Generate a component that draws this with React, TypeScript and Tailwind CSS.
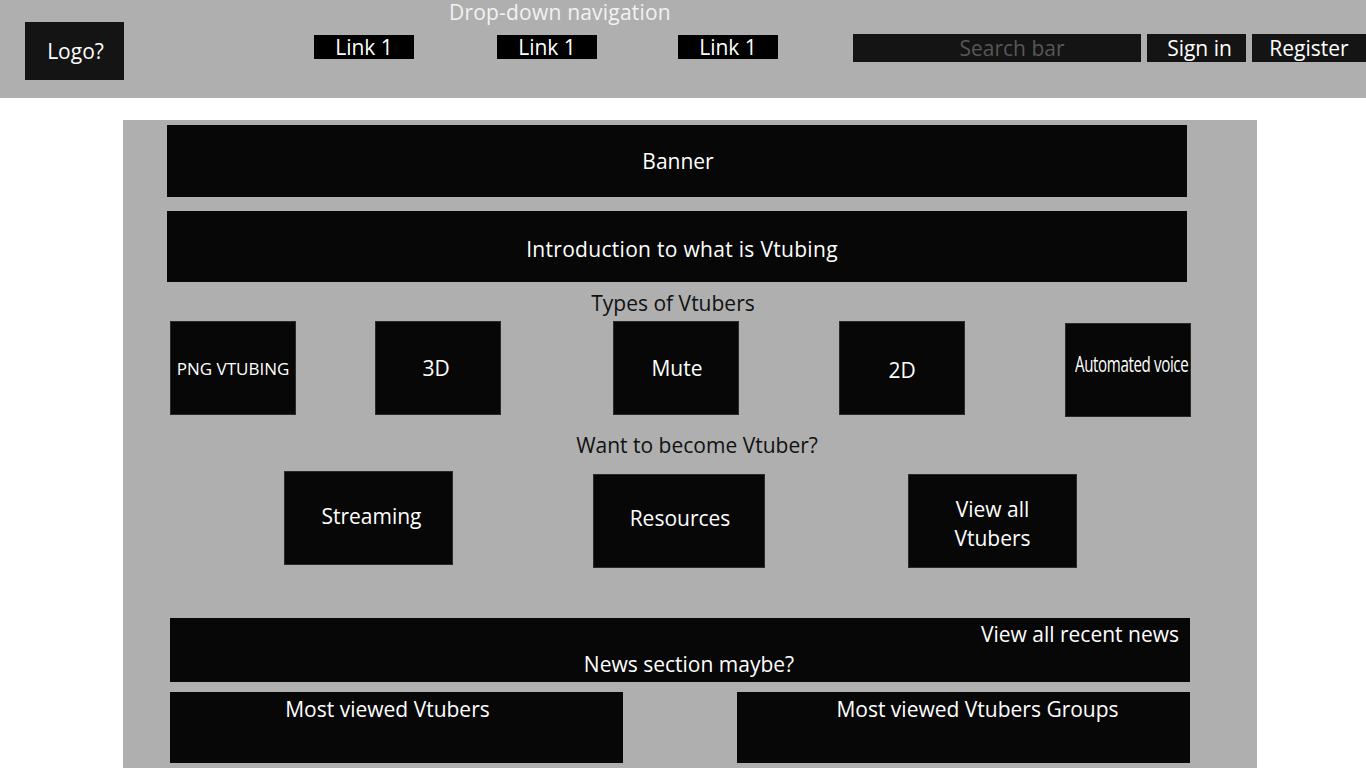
import React from 'react';

const font = { fontFamily: '"Open Sans", "Noto Sans", sans-serif' };

function TypeBox({ label, className }: { label: string; className: string }) {
  return (
    <div
      className={`flex h-[94px] w-[126px] items-center justify-center border border-[#2a2a2a] bg-[#070707] text-white ${className}`}
    >
      {label}
    </div>
  );
}

export default function App() {
  return (
    <div className="min-h-[768px] bg-white text-[21px] leading-none" style={font}>
      {/* top bar */}
      <header className="flex h-[98px] bg-[#afafaf]">
        <div className="ml-[25px] mt-[22px] flex h-[58px] w-[100px] items-center justify-center bg-[#141414] pl-[2px] text-white">
          Logo?
        </div>
        <div className="ml-[190px] flex flex-col">
          <div className="ml-[135px] h-[35px] text-[#f2f2f2] leading-[24px] tracking-[0.2px]">Drop-down navigation</div>
          <div className="flex gap-[81px]">
            <div className="flex h-[24px] w-[100px] items-center justify-center bg-black text-white">Link 1</div>
            <div className="ml-[2px] flex h-[24px] w-[100px] items-center justify-center bg-black text-white">Link 1</div>
            <div className="flex h-[24px] w-[100px] items-center justify-center bg-black text-white">Link 1</div>
          </div>
        </div>
        <div className="ml-[75px] mt-[34px] flex h-[28px] gap-[6px]">
          <div className="flex w-[288px] items-center justify-center pl-[30px] bg-[#141414] text-[#575757]">Search bar</div>
          <div className="flex w-[99px] items-center justify-center bg-[#141414] pl-[6px] text-white">Sign in</div>
          <div className="flex w-[114px] items-center justify-center bg-[#141414] text-white">Register</div>
        </div>
      </header>

      {/* main panel */}
      <main className="ml-[123px] mt-[22px] flex min-h-[648px] w-[1134px] flex-col bg-[#afafaf] pb-[10px]">
        <div className="ml-[44px] mt-[5px] flex h-[72px] w-[1020px] items-center justify-center bg-[#070707] pl-[2px] text-white">
          Banner
        </div>
        <div className="ml-[44px] mt-[14px] flex h-[71px] w-[1020px] items-center justify-center bg-[#070707] pt-[5px] pl-[10px] text-white tracking-[0.3px]">
          Introduction to what is Vtubing
        </div>
        <div className="ml-[44px] mt-[11px] w-[1020px] text-center text-[#111]">
          <span className="mr-[8px]">Types of Vtubers</span>
        </div>

        <div className="mt-[7px] flex items-start">
          <TypeBox label="PNG VTUBING" className="ml-[47px] text-[17px]" />
          <TypeBox label="3D" className="ml-[79px] pr-[4px]" />
          <TypeBox label="Mute" className="ml-[112px] pl-[2px]" />
          <TypeBox label="2D" className="ml-[100px] pt-[4px]" />
          <div className="ml-[100px] mt-[2px] flex h-[94px] w-[126px] items-start justify-center border border-[#2a2a2a] bg-[#070707] pt-[30px] pl-[8px] text-white">
            <span className="inline-block scale-x-[0.72] whitespace-nowrap tracking-tight">Automated voice</span>
          </div>
        </div>

        <div className="ml-[44px] mt-[18px] w-[1020px] pl-[40px] text-center text-[#111]">Want to become Vtuber?</div>

        <div className="mt-[15px] flex items-start">
          <div className="ml-[161px] flex h-[94px] w-[169px] items-center justify-center border border-[#2a2a2a] bg-[#070707] pb-[4px] pl-[6px] text-white">
            Streaming
          </div>
          <div className="ml-[140px] mt-[3px] flex h-[94px] w-[172px] items-center justify-center border border-[#2a2a2a] bg-[#070707] pb-[6px] pl-[2px] text-white">
            Resources
          </div>
          <div className="ml-[143px] mt-[3px] flex h-[94px] w-[169px] flex-col items-center justify-center gap-[8px] border border-[#2a2a2a] bg-[#070707] pt-[6px] text-white">
            <span>View all</span>
            <span>Vtubers</span>
          </div>
        </div>

        <div className="ml-[47px] mt-[50px] flex h-[64px] w-[1020px] flex-col bg-[#070707] text-white">
          <div className="mt-[6px] self-end pr-[11px]">View all recent news</div>
          <div className="mt-[9px] pl-[18px] text-center">News section maybe?</div>
        </div>

        <div className="mt-[10px] flex">
          <div className="ml-[47px] h-[71px] w-[453px] bg-[#070707] pt-[7px] pr-[18px] text-center text-white">
            Most viewed Vtubers
          </div>
          <div className="ml-[114px] h-[71px] w-[453px] bg-[#070707] pt-[7px] pl-[28px] text-center text-white">
            Most viewed Vtubers Groups
          </div>
        </div>
      </main>
    </div>
  );
}
